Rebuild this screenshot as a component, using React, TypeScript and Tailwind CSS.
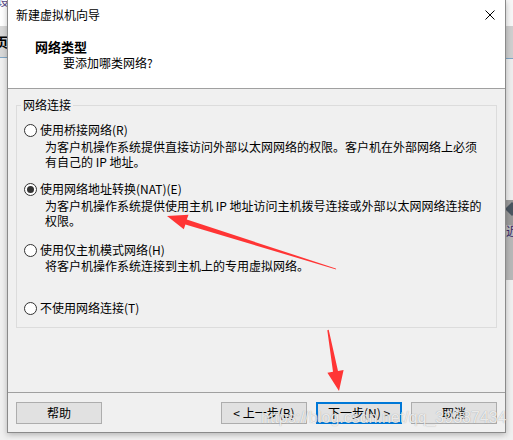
import React from "react";

function Radio({ checked }: { checked?: boolean }) {
  return (
    <span className="w-[13px] h-[13px] rounded-full border border-[#333333] bg-white flex items-center justify-center shrink-0">
      {checked ? <span className="w-[7px] h-[7px] rounded-full bg-[#333333]" /> : null}
    </span>
  );
}

function RadioRow({ label, checked, className }: { label: string; checked?: boolean; className?: string }) {
  return (
    <div className={"flex items-center h-[16px] " + (className ?? "")}>
      <Radio checked={checked} />
      <span className="ml-[3px] leading-[16px] whitespace-nowrap">{label}</span>
    </div>
  );
}

function Btn({ children, focused }: { children: React.ReactNode; focused?: boolean }) {
  return (
    <div
      className={
        "w-[86px] h-[22px] flex items-center justify-center bg-[#e1e1e1] leading-[16px] whitespace-nowrap " +
        (focused ? "border-2 border-[#0078d7]" : "border border-[#adadad]")
      }
    >
      {children}
    </div>
  );
}

export default function App() {
  return (
    <div className="relative w-[513px] h-[440px] overflow-hidden bg-[#f2f2f2] font-['Noto_Sans_CJK_SC',sans-serif] text-[12px] text-black">
      {/* background window, left strip */}
      <div className="absolute left-0 top-0 w-[8px] h-[440px] flex flex-col overflow-hidden">
        <div className="h-[26px] bg-white relative">
          <span className="absolute left-[-3px] top-[-8px] text-[12px] text-[#5a4a8a]">设</span>
        </div>
        <div className="h-[32px] bg-[#d8d8d8] border-b border-[#7fa6c6] relative">
          <span className="absolute left-[-5px] top-[8px] text-[13px] font-bold leading-[16px]">页</span>
        </div>
        <div className="flex-1 bg-[#f0f0f0]" />
      </div>
      {/* background window, right strip */}
      <div className="absolute left-[506px] top-0 w-[7px] h-[440px] flex flex-col overflow-hidden">
        <div className="h-[26px] bg-[#f7f7f7]" />
        <div className="h-[33px] bg-[#cfcfcf] border-b border-[#7fa6c6]" />
        <div className="h-[141px] bg-[#eeeeee]" />
        <div className="h-[25px] bg-[#9a9a9a] relative">
          <span className="absolute left-[1px] top-[4px] w-[10px] h-[10px] rotate-45 bg-[#4a5560]" />
        </div>
        <div className="h-[55px] bg-[#b8b8b8] relative">
          <span className="absolute left-[0px] top-[-2px] text-[12px] leading-[16px] text-[#3a2a6a]">近</span>
        </div>
        <div className="flex-1 bg-[#f0f0f0]" />
      </div>

      {/* dialog */}
      <div className="absolute left-[7px] top-0 w-[499px] h-[433px] border-x border-b border-[#8a8a8a] bg-[#f0f0f0] flex flex-col shadow-[0_2px_6px_rgba(0,0,0,0.25)]">
        <div className="h-[89px] bg-white border-b border-[#a0a0a0] flex flex-col">
          <div className="h-[30px] flex items-center justify-between pl-[8px] pr-[10px]">
            <span className="leading-[16px]">新建虚拟机向导</span>
            <svg width="10" height="10" viewBox="0 0 10 10">
              <path d="M0.5 0.5 L9.5 9.5 M9.5 0.5 L0.5 9.5" stroke="#000" strokeWidth="1" fill="none" />
            </svg>
          </div>
          <div className="mt-[9px] pl-[27px] font-bold text-[13px] leading-[16px]">网络类型</div>
          <div className="pl-[55px] leading-[16px]">要添加哪类网络?</div>
        </div>

        <div className="h-[303px] pt-[8px] px-[8px]">
          <fieldset className="border border-[#dcdcdc] pb-[11px]">
            <legend className="ml-[4px] px-[2px] leading-[16px]">网络连接</legend>
            <div className="pl-[7px] pt-[9px] flex flex-col">
              <RadioRow label="使用桥接网络(R)" />
              <div className="mt-[1px] pl-[21px] leading-[15px] whitespace-nowrap">
                为客户机操作系统提供直接访问外部以太网网络的权限。客户机在外部网络上必须
                <br />
                有自己的 IP 地址。
              </div>
              <RadioRow label="使用网络地址转换(NAT)(E)" checked className="mt-[12px]" />
              <div className="mt-[1px] pl-[21px] leading-[15px] whitespace-nowrap">
                为客户机操作系统提供使用主机 IP 地址访问主机拨号连接或外部以太网网络连接的
                <br />
                权限。
              </div>
              <RadioRow label="使用仅主机模式网络(H)" className="mt-[14px]" />
              <div className="pl-[21px] leading-[15px] whitespace-nowrap">将客户机操作系统连接到主机上的专用虚拟网络。</div>
              <RadioRow label="不使用网络连接(T)" className="mt-[27px]" />
            </div>
          </fieldset>
        </div>

        <div className="flex-1 border-t border-[#a0a0a0] pt-[9px] px-[8px] flex justify-between items-start">
          <Btn>帮助</Btn>
          <div className="flex gap-[9px]">
            <Btn>&lt; 上一步(B)</Btn>
            <Btn focused>下一步(N) &gt;</Btn>
            <Btn>取消</Btn>
          </div>
        </div>
      </div>

      {/* watermark */}
      <div className="absolute left-[261px] top-[408px] font-['Liberation_Sans',sans-serif] text-[16px] leading-[20px] whitespace-nowrap text-[rgba(255,255,255,0.8)] [text-shadow:0_0_1px_rgba(0,0,0,0.35)] pointer-events-none">
        https://blog.csdn.net/qq_39387434
      </div>

      {/* red annotation arrows */}
      <svg className="absolute left-0 top-0 pointer-events-none" width="513" height="440" viewBox="0 0 513 440">
        <polygon
          points="167,216 188.5,214.8 186.8,219.6 335.8,268.5 336.2,269.5 185.4,224.4 183.8,229.2"
          fill="#ff3535"
        />
        <polygon
          points="339,391 343.6,370 338,370.9 328.7,329.8 327.3,330.2 333,371.7 327.4,372.8"
          fill="#ff3535"
        />
      </svg>
    </div>
  );
}
